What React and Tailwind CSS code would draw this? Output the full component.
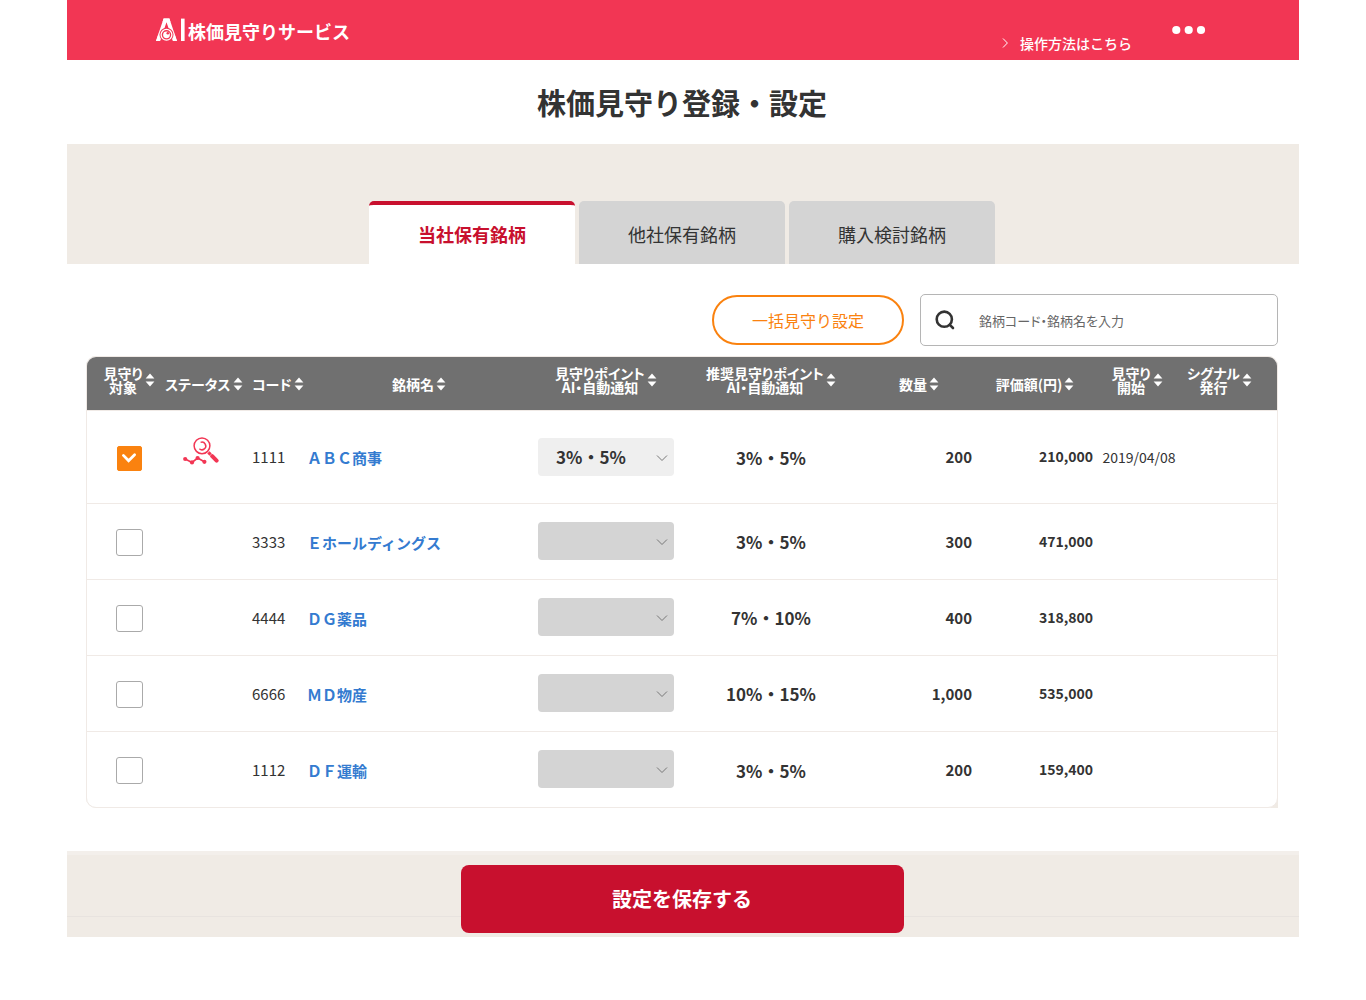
import { useState } from 'react';
import clsx from 'clsx';

const tabs = ['当社保有銘柄', '他社保有銘柄', '購入検討銘柄'];

const columns = [
    { lines: ['見守り', '対象'], width: 'w-[78px]', cell: 'pl-1.5 pb-3 text-center' },
    { lines: ['ステータス'], width: 'w-[75px]', cell: 'text-center' },
    { lines: ['コード'], width: 'w-[64px]', cell: 'pl-3 text-left' },
    { lines: ['銘柄名'], width: '', cell: 'text-center' },
    { lines: ['見守りポイント', 'AI・自動通知'], width: 'w-[144px]', cell: 'pb-3 text-center' },
    { lines: ['推奨見守りポイント', 'AI・自動通知'], width: 'w-[186px]', cell: 'pb-3 text-center' },
    { lines: ['数量'], width: 'w-[110px]', cell: 'text-center' },
    { lines: ['評価額(円)'], width: 'w-[122px]', cell: 'text-center' },
    { lines: ['見守り', '開始'], width: 'w-[86px]', cell: 'pr-1 pb-3 text-center' },
    { lines: ['シグナル', '発行'], width: 'w-[95px]', cell: 'pr-5 pb-3 text-center' },
];

const initialStocks = [
    { code: '1111', name: 'ＡＢＣ商事', watched: true, recommended: '3%・5%', quantity: '200', value: '210,000', start: '2019/04/08' },
    { code: '3333', name: 'Ｅホールディングス', watched: false, recommended: '3%・5%', quantity: '300', value: '471,000', start: '' },
    { code: '4444', name: 'ＤＧ薬品', watched: false, recommended: '7%・10%', quantity: '400', value: '318,800', start: '' },
    { code: '6666', name: 'ＭＤ物産', watched: false, recommended: '10%・15%', quantity: '1,000', value: '535,000', start: '' },
    { code: '1112', name: 'ＤＦ運輸', watched: false, recommended: '3%・5%', quantity: '200', value: '159,400', start: '' },
];

const points = ['3%・5%', '7%・10%', '10%・15%'];

function LogoMark() {
    return (
        <svg viewBox="0 0 30 24" className="h-6 w-[30px]" aria-hidden="true">
            <path d="M0 23 L7.6 0.6 H13.4 L21 23 H17 L10.5 4.2 L4 23 Z" fill="#fff" />
            <path d="M7.6 0.6 H13.4 L14.4 4 H6.6 Z" fill="#fff" />
            <circle cx="10.5" cy="16.8" r="7" fill="#f23654" />
            <path d="M0 23 L3.2 13.6 A8 8 0 0 0 4.6 21.4 L4 23 Z M21 23 L17.8 13.6 A8 8 0 0 1 16.4 21.4 L17 23 Z" fill="#fff" />
            <circle cx="10.5" cy="16.8" r="5.4" fill="none" stroke="#fff" strokeWidth="1.3" />
            <circle cx="10.5" cy="16.8" r="3.4" fill="#fff" />
            <circle cx="11.8" cy="15.2" r="1.3" fill="#f23654" />
            <rect x="25" y="0.6" width="3.6" height="22.4" fill="#fff" />
        </svg>
    );
}

function SortIcon() {
    return (
        <svg viewBox="0 0 10 14" className="h-[14px] w-[10px] shrink-0" fill="#fff" aria-hidden="true">
            <path d="M5 0.4 L9.4 5.4 H0.6 Z" />
            <path d="M5 13.6 L9.4 8.6 H0.6 Z" />
        </svg>
    );
}

function WatchingIcon() {
    return (
        <svg viewBox="0 0 36 28" className="mx-auto h-7 w-9" fill="none" stroke="#f23654" role="img" aria-label="見守り中">
            <circle cx="19" cy="8.8" r="7.9" strokeWidth="1.5" />
            <path d="M17.6 5.4 A3.8 3.8 0 1 1 16.4 11.8" strokeWidth="1.5" />
            <path d="M25.4 15.4 L27.6 17.6" strokeWidth="3.2" />
            <path d="M29.2 19.2 L33.6 23.6" strokeWidth="4" strokeLinecap="round" />
            <path d="M2.2 22 L9 25.4 L14.6 21 L21.4 24.8" strokeWidth="1.7" />
            <g fill="#f23654" stroke="none">
                <circle cx="2.2" cy="22" r="2.1" />
                <circle cx="9" cy="25.4" r="2.1" />
                <circle cx="14.6" cy="21" r="2.1" />
                <circle cx="21.4" cy="24.8" r="2.1" />
            </g>
        </svg>
    );
}

function StockRow({ stock, first, onToggle }) {
    return (
        <tr className={clsx('border-t border-[#f0eae6]', first ? 'h-[93px]' : 'h-[76px]')}>
            <td className="pt-[3px] pl-1.5">
                <div className="grid place-items-center">
                    <input
                        type="checkbox"
                        aria-label={`${stock.name}を見守り対象にする`}
                        checked={stock.watched}
                        onChange={onToggle}
                        className="peer col-start-1 row-start-1 size-[27px] appearance-none rounded-[3px] border border-[#aaa] bg-white checked:size-[25px] checked:rounded-[2px] checked:border-[#fa820f] checked:bg-[#fa820f]"
                    />
                    <svg viewBox="0 0 16 12" className="pointer-events-none col-start-1 row-start-1 hidden h-3 w-4 peer-checked:block" fill="none" stroke="#fff" strokeWidth="2.8" aria-hidden="true">
                        <path d="M2.4 3.4 L7.6 8.8 L13.6 2.8" strokeLinecap="round" />
                    </svg>
                </div>
            </td>
            <td className="pr-1 pb-3">{stock.watched && <WatchingIcon />}</td>
            <td className="pt-0.5 pl-3 text-[15px]">{stock.code}</td>
            <td className="pt-0.5 pl-[3px]">
                <a href={`#${stock.code}`} className="text-[15px] font-bold text-[#347bd0]">{stock.name}</a>
            </td>
            <td className="px-1">
                <div className="grid items-center">
                    <select
                        aria-label={`${stock.name}の見守りポイント`}
                        disabled={!stock.watched}
                        defaultValue={stock.watched ? points[0] : ''}
                        className="col-start-1 row-start-1 h-[38px] w-full appearance-none rounded-[4px] bg-[#efefef] px-[18px] text-[17px] font-bold disabled:bg-[#d4d4d4] disabled:opacity-100"
                    >
                        <option value=""></option>
                        {points.map((point) => (
                            <option key={point} value={point}>{point}</option>
                        ))}
                    </select>
                    <svg viewBox="0 0 12 8" className="pointer-events-none col-start-1 row-start-1 mt-0.5 mr-1.5 h-2 w-3 justify-self-end" fill="none" stroke="#777" aria-hidden="true">
                        <path d="M1 1.5 L6 6.5 L11 1.5" />
                    </svg>
                </div>
            </td>
            <td className="pt-0.5 text-center text-[17px] font-bold">{stock.recommended}</td>
            <td className="pt-0.5 pr-0.5 text-right text-[15px] font-bold">{stock.quantity}</td>
            <td className="pr-[3px] text-right text-[14px] font-bold">{stock.value}</td>
            <td className="pt-0.5 text-center text-[14px]">{stock.start}</td>
            <td></td>
        </tr>
    );
}

export default function App() {
    const [activeTab, setActiveTab] = useState(0);
    const [stocks, setStocks] = useState(initialStocks);

    const toggle = (code) => {
        setStocks(stocks.map((s) => (s.code === code ? { ...s, watched: !s.watched } : s)));
    };

    return (
        <div className="bg-white px-[67px] font-['Noto_Sans_CJK_JP',sans-serif] text-[#333]">
            {/* Header */}
            <header className="flex h-[60px] justify-between bg-[#f23654] pr-[93px] pl-[89px] text-white">
                <div className="flex items-center">
                    <LogoMark />
                    <span className="pt-0.5 pl-0.5 text-[18px] font-bold">株価見守りサービス</span>
                </div>
                <div className="flex">
                    <a href="#help" className="mr-10 flex items-center gap-3 pt-[26px] text-[14px] font-medium">
                        <svg viewBox="0 0 6 10" className="h-[10px] w-[6px]" fill="none" stroke="#fff" aria-hidden="true">
                            <path d="M1 0.5 L5.4 5 L1 9.5" />
                        </svg>
                        操作方法はこちら
                    </a>
                    <button type="button" aria-label="メニュー">
                        <svg viewBox="0 0 34 10" className="h-[10px] w-[34px]" fill="#fff" aria-hidden="true">
                            <circle cx="4.3" cy="5" r="4.1" />
                            <circle cx="16.7" cy="5" r="4.1" />
                            <circle cx="29" cy="5" r="4.1" />
                        </svg>
                    </button>
                </div>
            </header>

            <h1 className="flex h-[84px] items-center justify-center pt-0.5 pr-0.5 text-[29px] font-bold">株価見守り登録・設定</h1>

            {/* Tabs */}
            <div role="tablist" className="flex h-[120px] items-end justify-center gap-1 bg-[#f0ebe5] pr-0.5">
                {tabs.map((tab, i) => (
                    <button
                        key={tab}
                        type="button"
                        role="tab"
                        aria-selected={activeTab === i}
                        onClick={() => setActiveTab(i)}
                        className={clsx(
                            'h-[63px] w-[206px] rounded-t-[5px] border-t-4 text-[18px]',
                            activeTab === i ? 'border-[#c8102e] bg-white font-bold text-[#c8102e]' : 'border-[#d4d4d4] bg-[#d4d4d4]'
                        )}
                    >
                        {tab}
                    </button>
                ))}
            </div>

            <main className="pt-[30px] pr-[21px] pl-[19px]">
                {/* Toolbar */}
                <div className="flex items-center justify-end gap-4">
                    <button type="button" className="h-[50px] w-[192px] rounded-full border-2 border-[#fa820f] text-[16px] text-[#fa820f]">
                        一括見守り設定
                    </button>
                    <div className="flex h-[52px] w-[358px] items-center rounded-[5px] border border-[#b5b5b5] pl-[14px]">
                        <svg viewBox="0 0 20 20" className="size-5 shrink-0" fill="none" stroke="#333" strokeWidth="2.6" aria-hidden="true">
                            <circle cx="9.3" cy="9.2" r="7.6" />
                            <path d="M14.8 14.8 L18 18" strokeLinecap="round" />
                        </svg>
                        <input
                            type="text"
                            aria-label="銘柄を検索"
                            placeholder="銘柄コード・銘柄名を入力"
                            className="h-full min-w-0 flex-1 pl-6 text-[13px] outline-none [font-feature-settings:'palt'] placeholder:text-[#666]"
                        />
                    </div>
                </div>

                {/* Stock list */}
                <div className="mt-[10px] rounded-[10px] rounded-br-none bg-[#f0ebe5]">
                    <div className="overflow-hidden rounded-[10px] border border-[#f0eae6] bg-white">
                        <table className="w-full table-fixed border-collapse">
                            <thead className="bg-[#707070] text-white">
                                <tr className="h-[53px]">
                                    {columns.map((column) => (
                                        <th key={column.lines.join('')} scope="col" className={clsx(column.width, column.cell)}>
                                            <button type="button" className="inline-flex items-center gap-0.5 text-[14px] leading-[14px] font-bold whitespace-nowrap [font-feature-settings:'palt']">
                                                <span>
                                                    {column.lines.map((line) => (
                                                        <span key={line} className="block">{line}</span>
                                                    ))}
                                                </span>
                                                <SortIcon />
                                            </button>
                                        </th>
                                    ))}
                                </tr>
                            </thead>
                            <tbody>
                                {stocks.map((stock, i) => (
                                    <StockRow key={stock.code} stock={stock} first={i === 0} onToggle={() => toggle(stock.code)} />
                                ))}
                            </tbody>
                        </table>
                    </div>
                </div>
            </main>

            <footer className="relative mt-[43px] flex h-[86px] flex-col items-center border-t-4 border-[#f3efeb] bg-[#f0ebe5] pt-2.5 pr-0.5">
                <hr className="absolute inset-x-0 top-[61px] border-[#e8e3df]" />
                <button type="button" className="relative h-[68px] w-[443px] rounded-[8px] bg-[#c8102e] text-[20px] font-bold text-white">
                    設定を保存する
                </button>
            </footer>
        </div>
    );
}
